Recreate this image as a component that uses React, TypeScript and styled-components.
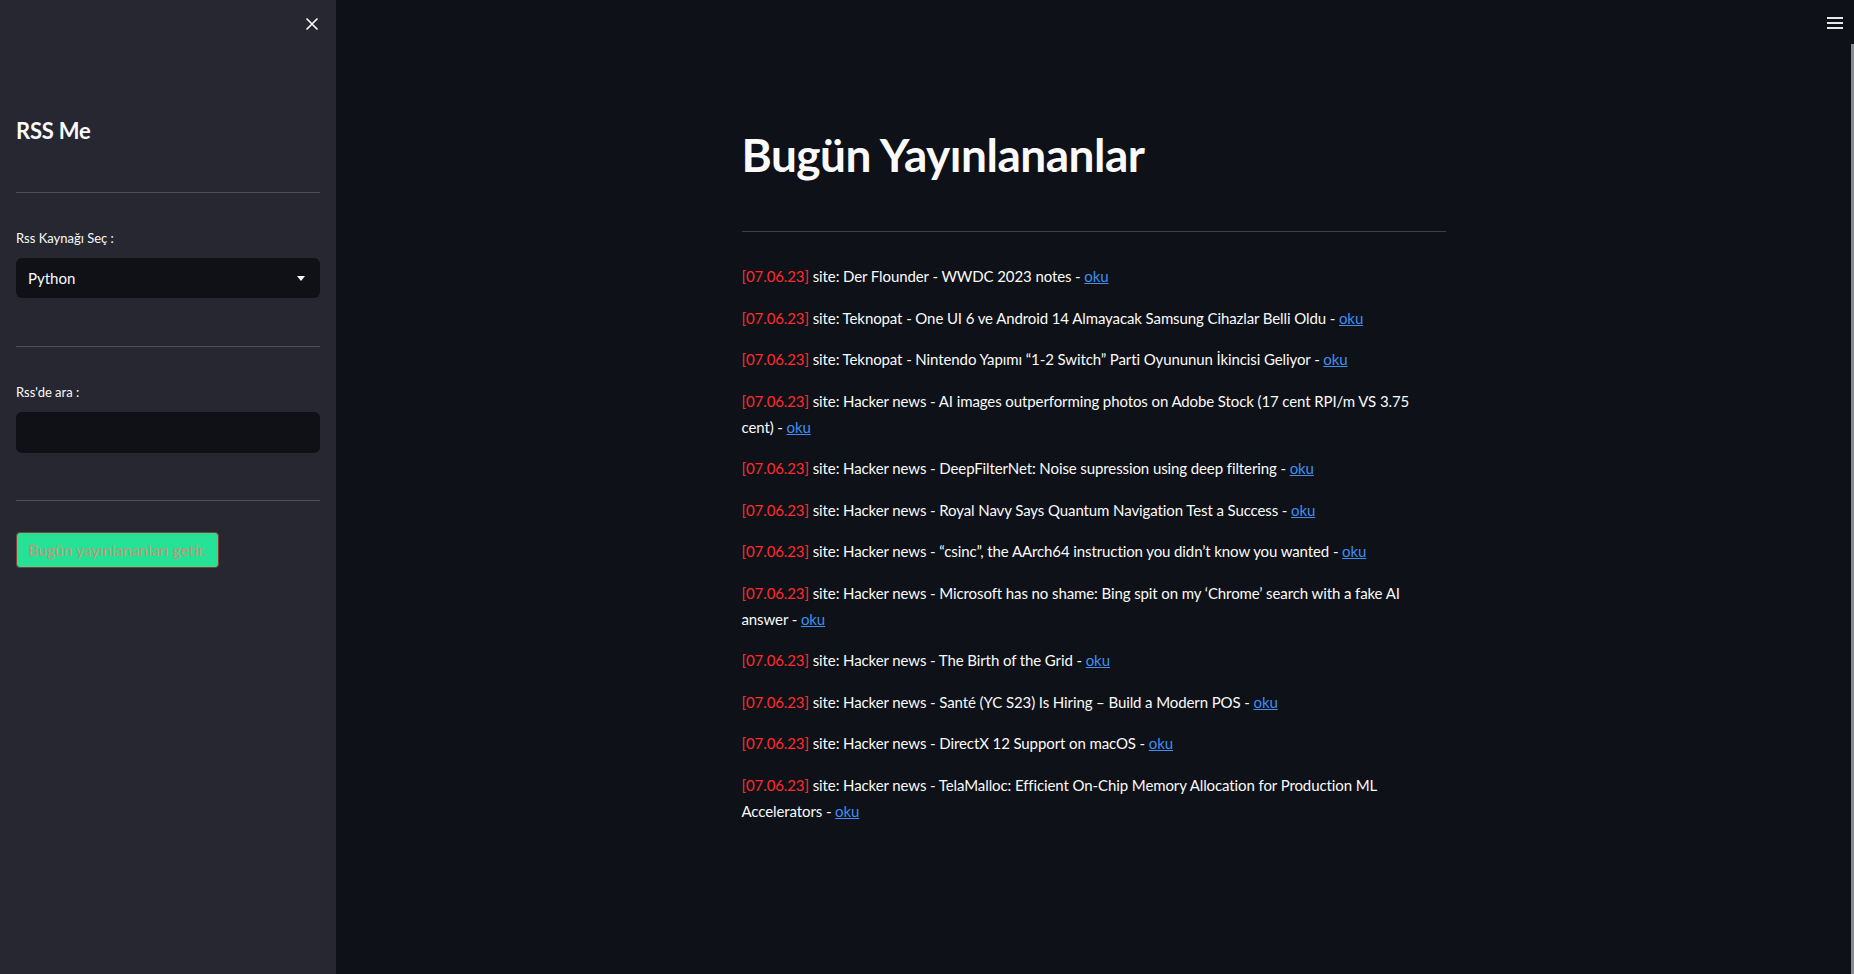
import React from "react";
import styled, { createGlobalStyle } from "styled-components";

const Global = createGlobalStyle`
  html, body { margin: 0; padding: 0; background: #0e1117; }
  body { font-family: Lato, "Noto Sans", sans-serif; color: #fafafa; }
  * { box-sizing: border-box; }
`;

const Shell = styled.div`
  display: flex;
  width: 100%;
  height: 974px;
  overflow: hidden;
  position: relative;
`;

const Sidebar = styled.aside`
  width: 336px;
  flex: 0 0 336px;
  background: #262730;
  display: flex;
  flex-direction: column;
  padding: 0 16px;
`;

const SideTop = styled.div`
  display: flex;
  justify-content: flex-end;
  height: 48px;
  padding-top: 13px;
  margin-right: -3px;
`;

const IconButton = styled.button`
  background: none;
  border: none;
  padding: 0;
  width: 22px;
  height: 22px;
  color: #fafafa;
  display: flex;
  align-items: center;
  justify-content: center;
  cursor: pointer;
`;

const SideTitle = styled.h2`
  margin: 70px 0 0;
  font-size: 22px;
  font-weight: 700;
  line-height: 1.2;
  letter-spacing: -0.2px;
`;

const Rule = styled.hr<{ $top: number; $bottom: number }>`
  border: none;
  border-top: 1px solid rgba(250, 250, 250, 0.2);
  margin: ${(p) => p.$top}px 0 ${(p) => p.$bottom}px;
`;

const Label = styled.label`
  font-size: 13px;
  line-height: 1.3;
  display: block;
  margin-bottom: 11px;
`;

const SelectBox = styled.div`
  height: 40px;
  background: #0f1117;
  border-radius: 6px;
  display: flex;
  align-items: center;
  justify-content: space-between;
  padding: 0 12px;
  font-size: 15px;
`;

const Caret = styled.span`
  width: 0;
  height: 0;
  border-left: 4.5px solid transparent;
  border-right: 4.5px solid transparent;
  border-top: 5px solid #fafafa;
  margin-right: 3px;
`;

const InputBox = styled.input`
  height: 41px;
  width: 100%;
  background: #0f1117;
  border: none;
  border-radius: 6px;
  outline: none;
  color: #fafafa;
  padding: 0 12px;
  font-size: 15px;
`;

const GreenButton = styled.button`
  align-self: flex-start;
  height: 36px;
  width: 203px;
  background: #26e296;
  border: 1px solid #8a3a30;
  border-radius: 4px;
  color: #c2967a;
  font-family: Lato, "Noto Sans", sans-serif;
  font-size: 15.5px;
  padding: 0;
`;

const Main = styled.main`
  flex: 1;
  display: flex;
  justify-content: center;
  position: relative;
`;

const Content = styled.div`
  width: 704px;
  padding-top: 127px;
  margin-left: -3px;
`;

const Title = styled.h1`
  margin: 0;
  font-size: 46px;
  font-weight: 700;
  line-height: 1.2;
  letter-spacing: -0.5px;
`;

const MainRule = styled.hr`
  border: none;
  border-top: 1px solid rgba(250, 250, 250, 0.2);
  margin: 49px 0 32px;
`;

const Item = styled.p`
  margin: 0 0 16px;
  max-width: 680px;
  font-size: 15px;
  line-height: 25.6px;
  letter-spacing: -0.1px;
`;

const DateTag = styled.span`
  color: #ff2b2b;
`;

const Link = styled.a`
  color: #3f8ff0;
  text-decoration: underline;
`;

const Burger = styled.button`
  position: absolute;
  top: 16px;
  right: 11px;
  background: none;
  border: none;
  color: #fafafa;
  width: 16px;
  height: 14px;
  display: flex;
  flex-direction: column;
  justify-content: space-between;
  padding: 1px 0;
`;

const BurgerLine = styled.span`
  display: block;
  height: 2px;
  background: #e8e8e8;
`;

const ScrollThumb = styled.div`
  position: absolute;
  right: 0;
  top: 44px;
  width: 3px;
  bottom: 0;
  background: #8a8b90;
`;

const items: string[] = [
  "site: Der Flounder - WWDC 2023 notes - ",
  "site: Teknopat - One UI 6 ve Android 14 Almayacak Samsung Cihazlar Belli Oldu - ",
  "site: Teknopat - Nintendo Yapımı “1-2 Switch” Parti Oyununun İkincisi Geliyor - ",
  "site: Hacker news - AI images outperforming photos on Adobe Stock (17 cent RPI/m VS 3.75 cent) - ",
  "site: Hacker news - DeepFilterNet: Noise supression using deep filtering - ",
  "site: Hacker news - Royal Navy Says Quantum Navigation Test a Success - ",
  "site: Hacker news - “csinc”, the AArch64 instruction you didn’t know you wanted - ",
  "site: Hacker news - Microsoft has no shame: Bing spit on my ‘Chrome’ search with a fake AI answer - ",
  "site: Hacker news - The Birth of the Grid - ",
  "site: Hacker news - Santé (YC S23) Is Hiring – Build a Modern POS - ",
  "site: Hacker news - DirectX 12 Support on macOS - ",
  "site: Hacker news - TelaMalloc: Efficient On-Chip Memory Allocation for Production ML Accelerators - ",
];

export default function App() {
  return (
    <>
      <Global />
      <Shell>
        <Sidebar>
          <SideTop>
            <IconButton aria-label="close">
              <svg width="12" height="12" viewBox="0 0 12 12">
                <path d="M1 1 L11 11 M11 1 L1 11" stroke="#fafafa" strokeWidth="1.7" strokeLinecap="round" />
              </svg>
            </IconButton>
          </SideTop>
          <SideTitle>RSS Me</SideTitle>
          <Rule $top={48} $bottom={37} />
          <Label>Rss Kaynağı Seç :</Label>
          <SelectBox>
            <span>Python</span>
            <Caret />
          </SelectBox>
          <Rule $top={48} $bottom={37} />
          <Label>Rss'de ara :</Label>
          <InputBox />
          <Rule $top={47} $bottom={31} />
          <GreenButton>Bugün yayınlananları getir.</GreenButton>
        </Sidebar>
        <Main>
          <Content>
            <Title>Bugün Yayınlananlar</Title>
            <MainRule />
            {items.map((text, i) => (
              <Item key={i}>
                <DateTag>[07.06.23]</DateTag> {text}
                <Link href="#">oku</Link>
              </Item>
            ))}
          </Content>
          <Burger aria-label="menu">
            <BurgerLine />
            <BurgerLine />
            <BurgerLine />
          </Burger>
          <ScrollThumb />
        </Main>
      </Shell>
    </>
  );
}
